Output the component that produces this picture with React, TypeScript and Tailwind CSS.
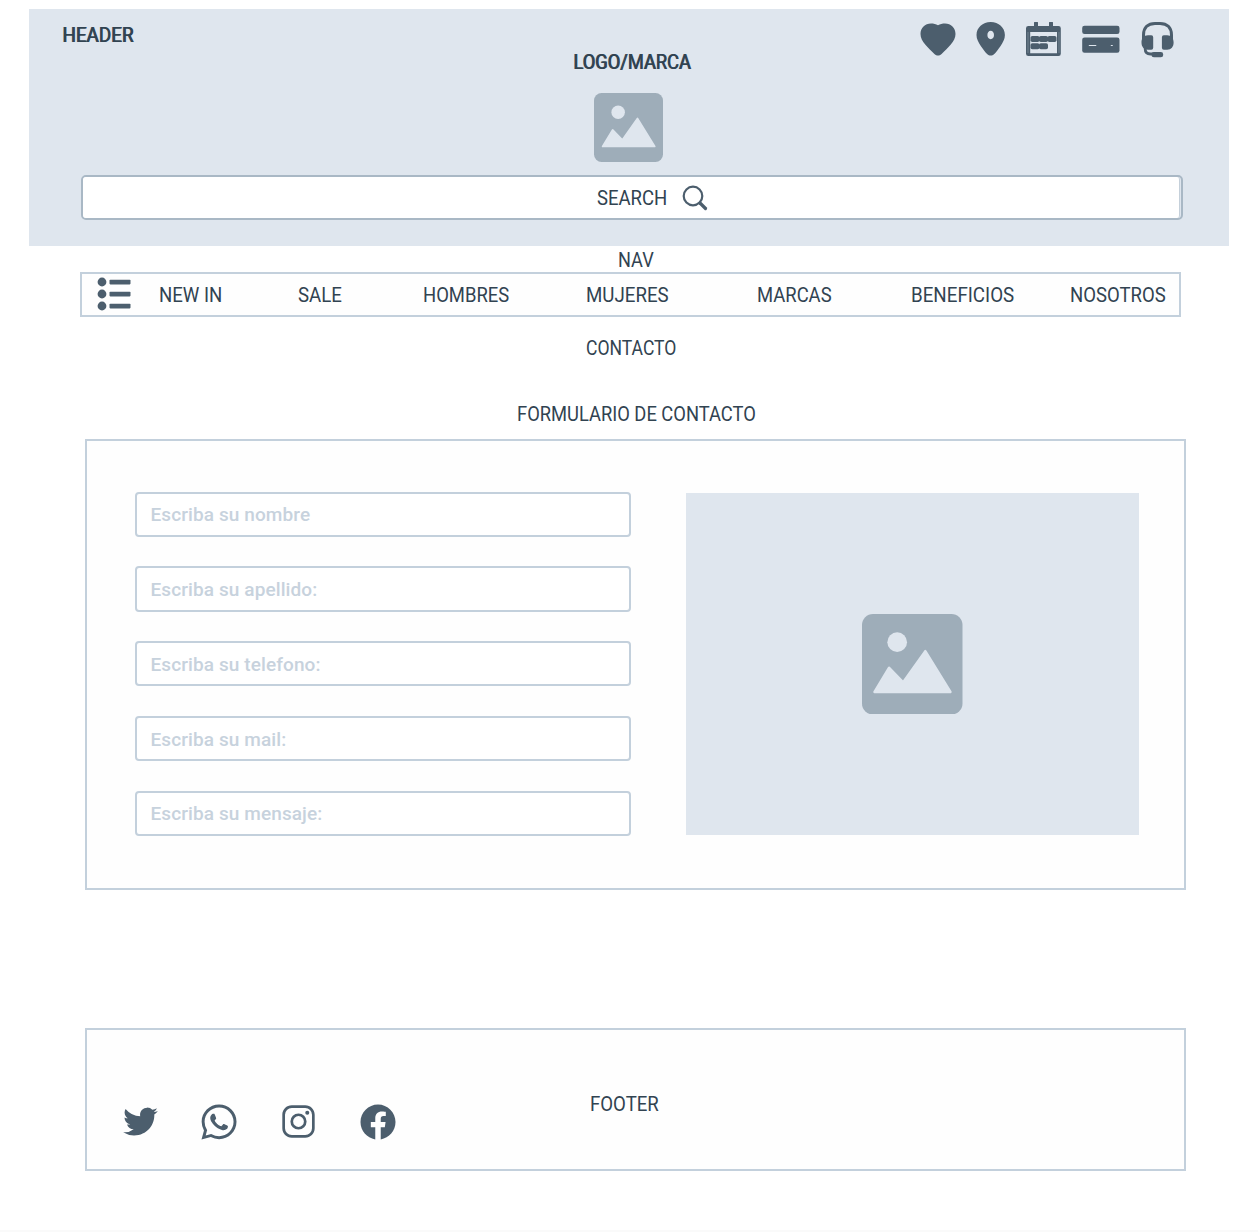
import type { ReactNode } from 'react';
import { IoLogoFacebook, IoLogoInstagram, IoLogoTwitter, IoLogoWhatsapp } from 'react-icons/io5';

const navItems: { label: string; box: string; stretch: string }[] = [
  { label: 'NEW IN', box: 'w-[139.5px]', stretch: 'scale-x-[0.955]' },
  { label: 'SALE', box: 'w-[124.5px]', stretch: 'scale-x-[0.957]' },
  { label: 'HOMBRES', box: 'w-[163px]', stretch: 'scale-x-[0.945]' },
  { label: 'MUJERES', box: 'w-[171.5px]', stretch: 'scale-x-[0.959]' },
  { label: 'MARCAS', box: 'w-[154px]', stretch: 'scale-x-[0.945]' },
  { label: 'BENEFICIOS', box: 'w-[158.5px]', stretch: 'scale-x-[0.962]' },
  { label: 'NOSOTROS', box: 'w-[100px]', stretch: 'scale-x-[0.95]' },
];

const fields = [
  'Escriba su nombre',
  'Escriba su apellido:',
  'Escriba su telefono:',
  'Escriba su mail:',
  'Escriba su mensaje:',
];

function PictureIcon({ className }: { className: string }) {
  return (
    <svg viewBox="0 0 100 100" className={className}>
      <rect width="100" height="100" rx="11" fill="#9eadb9" />
      <circle cx="35" cy="28" r="9.8" fill="#dfe6ee" />
      <path
        d="M12.5 77.5 27 53.5 41 68 63 37 88 77.5Z"
        fill="#dfe6ee"
        stroke="#dfe6ee"
        strokeWidth="2.5"
        strokeLinejoin="round"
      />
    </svg>
  );
}

function HeaderIcons() {
  return (
    <div className="flex h-9 text-[#4c5e6d]">
      <svg viewBox="0 0 36 36" className="size-9" fill="currentColor">
        <path d="M18 3.300C16 2 13.500 1.500 11 1.500 5 1.500.5 5.700.5 12c0 4 1.900 7.100 4.700 10.500 2.900 3.600 6.300 6.800 9.200 9.400 1.400 1.300 2.300 1.700 3.600 1.700s2.200-.4 3.600-1.700c2.900-2.600 6.300-5.800 9.200-9.400 2.800-3.400 4.700-6.500 4.700-10.500 0-6.300-4.500-10.500-10.500-10.500-2.500 0-5 .5-7 1.800z" />
      </svg>
      <svg viewBox="0 0 30 36" className="ml-[20px] h-9 w-[30px]" fill="currentColor">
        <path
          fillRule="evenodd"
          d="M14.700 0C6.700 0 .5 5.600.5 13c0 4 1.900 7.300 4.300 11 2.200 3.300 4.400 6 6.300 8.100 1.300 1.300 2.200 1.500 3.600 1.500s2.300-.2 3.600-1.500c1.900-2.100 4.100-4.800 6.300-8.100 2.400-3.700 4.300-7 4.300-11C28.900 5.600 22.700 0 14.700 0zm0 8.800c1.900 0 3.300 1.900 3.300 4.200s-1.400 4.200-3.300 4.200-3.300-1.900-3.300-4.200S12.800 8.800 14.700 8.800z"
        />
      </svg>
      <svg viewBox="0 0 36 36" className="ml-[20px] size-9" fill="currentColor">
        <path
          fillRule="evenodd"
          d="M8 .5q0-.5.500-.5h3q.500 0 .5.500V4h11V.5q0-.5.500-.5h3q.500 0 .5.500V4h5.500q2.300 0 2.300 2.300v25.500q0 2.300-2.300 2.300H2.400Q0 34.100 0 31.800V6.300Q0 4 2.400 4H8zM4.200 10v21.300h26.800V10z"
        />
        <path d="M2 10v21M33 10v21" fill="none" stroke="#8595a2" strokeWidth=".7" />
        <rect x="4.500" y="14" width="9" height="6" rx="1.800" />
        <rect x="13" y="14" width="9" height="6" rx="1.800" />
        <rect x="21.500" y="14" width="9" height="6" rx="1.800" />
        <rect x="4.500" y="21.300" width="9" height="6" rx="1.800" />
        <rect x="13" y="21.300" width="9" height="6" rx="1.800" />
        <path d="M6 17h23M6 24.300h14" stroke="currentColor" strokeWidth="3" />
      </svg>
      <svg viewBox="0 0 38 36" className="ml-[20px] h-9 w-[38px]">
        <rect x=".2" y="3.700" width="37.300" height="8.300" rx="2.300" fill="currentColor" />
        <rect x=".2" y="15.500" width="37.300" height="15.200" rx="2.300" fill="currentColor" />
        <path d="M7.300 23.500h6.500M29.300 23.500h1" stroke="#dfe6ee" strokeWidth="1.200" strokeLinecap="round" />
      </svg>
      <svg viewBox="0 0 34 36" className="ml-[21px] h-9 w-[34px]" fill="none" stroke="currentColor">
        <path d="M2.500 17v-4C2.500 5.500 7 1.500 14 1.500h5C26 1.500 30.500 5.500 30.500 13v4" strokeWidth="3" />
        <path
          d="M10.300 13.300H7C2.800 13.300.5 16.300.5 20.500s2.300 7.200 6.500 7.200h3.300q1.900 0 1.900-1.900V15.200q0-1.900-1.900-1.900zM22.800 13.300h3.300c4.200 0 6.500 3 6.500 7.200s-2.300 7.200-6.500 7.200h-3.300q-1.900 0-1.900-1.900V15.200q0-1.900 1.900-1.900z"
          fill="currentColor"
          stroke="none"
        />
        <path d="M4.200 26v1c0 3.300 2 5 5.300 5H13" strokeWidth="2.800" />
        <rect x="10.500" y="30" width="11.700" height="5.300" rx="2.400" fill="currentColor" stroke="none" />
      </svg>
    </div>
  );
}

function ListIcon() {
  return (
    <svg viewBox="0 0 34 34" className="-mt-px h-[34px] w-[34px] text-[#4c5e6d]" fill="currentColor">
      <circle cx="5" cy="5" r="4.400" />
      <circle cx="5" cy="17" r="4.400" />
      <circle cx="5" cy="29" r="4.400" />
      <rect x="12.500" y="2.800" width="21" height="4.600" rx=".8" />
      <rect x="12.500" y="14.800" width="21" height="4.600" rx=".8" />
      <rect x="12.500" y="26.800" width="21" height="4.600" rx=".8" />
    </svg>
  );
}

function Caption({ children, className }: { children: ReactNode; className: string }) {
  return <div className={`h-5 origin-left self-start whitespace-nowrap ${className}`}>{children}</div>;
}

export default function App() {
  return (
    <div className="flex h-[1232px] w-[1258px] flex-col overflow-hidden border-b-2 border-[#fafafa] bg-white pt-[9px] font-['Roboto','Liberation_Sans',sans-serif] text-[19.5px] leading-5 text-[#314351]">
      <header className="ml-[28.5px] flex h-[236.500px] w-[1200.500px] flex-col bg-[#dfe6ee]">
        <div className="flex h-[44px] shrink-0 items-start justify-between pl-[33.500px] pr-[54px] pt-[13px]">
          <Caption className="mt-[4px] scale-x-[0.965] [text-shadow:1px_0_0_#314351]">HEADER</Caption>
          <HeaderIcons />
        </div>
        <Caption className="ml-[544.500px] shrink-0 scale-x-[0.937] [text-shadow:1px_0_0_#314351]">LOGO/MARCA</Caption>
        <PictureIcon className="ml-[565.500px] mt-[20px] size-[69px] shrink-0" />
        <div className="ml-[52px] mt-[13px] flex h-[45px] w-[1102.500px] shrink-0 rounded-[5px] border-2 border-[#a9b8c5] bg-[#dfe6ee] pr-px">
          <div className="flex grow items-center rounded-[3px] border-r border-[#c5d0da] bg-white pl-[514px]">
            <div className="mt-[2px] w-[85px]">
              <Caption className="scale-x-[0.95] w-fit">SEARCH</Caption>
            </div>
            <svg viewBox="0 0 26 26" className="size-[26px]" fill="none" stroke="#4c5e6d">
              <circle cx="11" cy="11" r="9.300" strokeWidth="2.200" />
              <path d="m18 18 5.500 5.500" strokeWidth="3.200" strokeLinecap="round" />
            </svg>
          </div>
        </div>
      </header>

      <Caption className="ml-[617.500px] mt-[5.500px] scale-x-[0.93]">NAV</Caption>
      <nav className="ml-[80px] mt-px flex h-[45px] w-[1101px] items-center border-2 border-[#c3d0dc] bg-[#fefefe] pl-[14.500px]">
        <ListIcon />
        <div className="ml-[28px] mt-[3px] flex">
          {navItems.map((item) => (
            <div key={item.label} className={item.box}>
              <a className={`block h-5 w-fit origin-left whitespace-nowrap ${item.stretch}`}>{item.label}</a>
            </div>
          ))}
        </div>
      </nav>

      <Caption className="ml-[586px] mt-[22px] scale-x-[0.9]">CONTACTO</Caption>
      <Caption className="ml-[516.500px] mt-[46px] scale-x-[0.94]">FORMULARIO DE CONTACTO</Caption>

      <main className="ml-[85px] mt-[14px] flex h-[451px] w-[1101px] border-2 border-[#c3d0dc] bg-[#fefefe] pl-[48px] pt-[50.500px]">
        <form className="flex w-[496px] flex-col gap-[29.500px]">
          {fields.map((field) => (
            <div
              key={field}
              className="flex h-[45.300px] items-center rounded-[4px] border-2 border-[#c3d0dc] bg-white pl-[13.500px] pt-[2px] text-[19px] font-medium tracking-[0.1px] text-[#c7d2dd]"
            >
              {field}
            </div>
          ))}
        </form>
        <div className="ml-[55px] mt-[1px] flex h-[342.500px] w-[453px] items-center justify-center bg-[#dfe6ee]">
          <PictureIcon className="size-[100.500px]" />
        </div>
      </main>

      <footer className="ml-[85px] mt-[138px] flex h-[143px] w-[1101px] border-2 border-[#c3d0dc] bg-[#fefefe] text-[#4c5e6d]">
        <div className="ml-[13.500px] mt-[71.500px] grid h-10 w-[317px] grid-cols-4 place-items-center">
          <IoLogoTwitter className="size-[37px]" />
          <IoLogoWhatsapp className="size-[40px]" />
          <IoLogoInstagram className="size-[37px]" />
          <IoLogoFacebook className="size-[40px]" />
        </div>
        <Caption className="ml-[172px] mt-[65px] scale-x-[0.955] text-[#314351]">FOOTER</Caption>
      </footer>
    </div>
  );
}
